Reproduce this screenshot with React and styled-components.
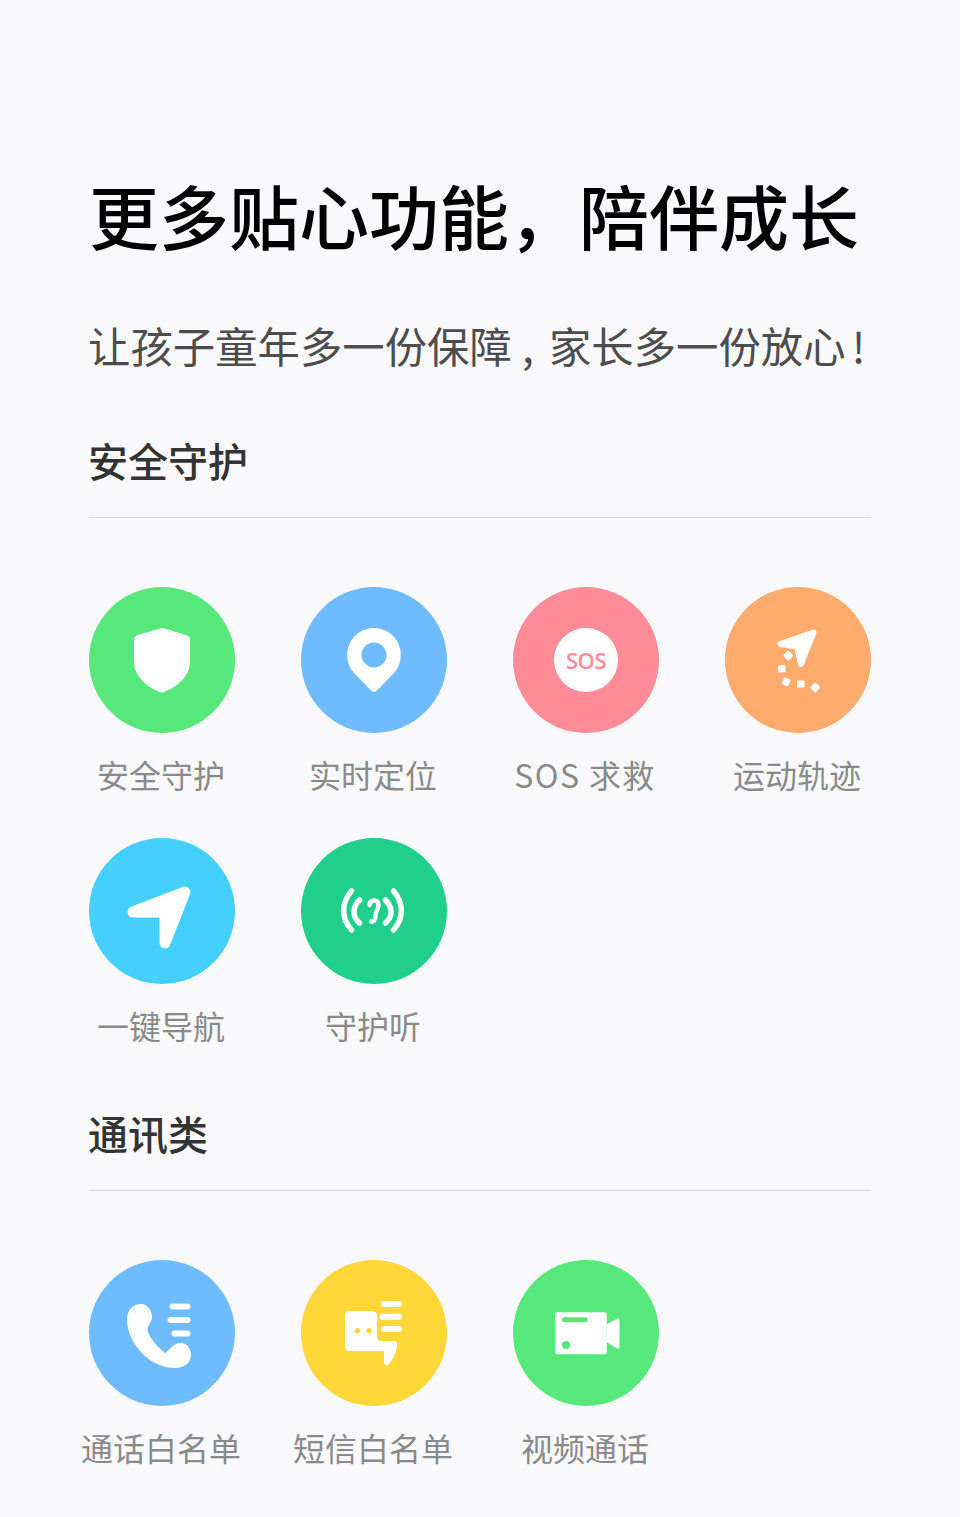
import React from "react";
import styled, { createGlobalStyle } from "styled-components";

const GlobalStyle = createGlobalStyle`
  html, body {
    margin: 0;
    padding: 0;
    background: #f9f9fc;
  }
  body {
    font-family: "Noto Sans CJK SC", "Noto Sans", sans-serif;
  }
`;

function ShieldIcon() {
  return (
    <Art viewBox="0 0 146 146">
      <path
        fill="#fff"
        d="M70.500 41.500q2.500-.8 5 0L98.500 48.500q2.500.8 2.500 3.500V74C101 90 88 100 73 106 58 100 45 90 45 74V52q0-2.700 2.500-3.500Z"
      />
    </Art>
  );
}

function PinIcon() {
  return (
    <Art viewBox="0 0 146 146">
      <path
        fill="#fff"
        fillRule="evenodd"
        d="M73 41A27 27 0 0 1 92 87L76 103.500Q73 106.500 70 103.500L54 87A27 27 0 0 1 73 41ZM73 55.500A12.500 12.500 0 1 0 73 80.500A12.500 12.500 0 1 0 73 55.500Z"
      />
    </Art>
  );
}

function TrailIcon() {
  return (
    <Art viewBox="0 0 146 146">
      <path
        fill="#fff"
        stroke="#fff"
        strokeWidth="6"
        strokeLinejoin="round"
        d="M88.500 45.500L55.500 57L72 59.500L76 77Z"
      />
      <g fill="#fff">
        <rect x="59.500" y="65" width="7.500" height="7.500" rx="1" transform="rotate(45 63.300 68.700)" />
        <rect x="53" y="78" width="7.500" height="7.500" rx="1" transform="rotate(-8 56.700 81.700)" />
        <rect x="57.500" y="91" width="7.500" height="7.500" rx="2" transform="rotate(25 61 94.700)" />
        <rect x="72" y="93.500" width="7.500" height="7" rx="1" />
        <rect x="86.500" y="96.500" width="7.500" height="7.500" rx="1" transform="rotate(45 90 100.300)" />
      </g>
    </Art>
  );
}

function NavIcon() {
  return (
    <Art viewBox="0 0 146 146">
      <path
        fill="#fff"
        stroke="#fff"
        strokeWidth="11"
        strokeLinejoin="round"
        d="M96 54L44 74L76 74L76 105Z"
      />
    </Art>
  );
}

function EarIcon() {
  return (
    <Art viewBox="0 0 146 146">
      <g fill="none" stroke="#fff" strokeWidth="5.500" strokeLinecap="round">
        <path d="M50.500 53C40 65 40 80 50.500 92" />
        <path d="M92.500 53C103 65 103 80 92.500 92" />
        <path d="M58.500 62C51 70 51 78 58.500 85" />
        <path d="M84.500 62C92 70 92 78 84.500 85" />
        <path strokeWidth="4.500" d="M68.500 67C69 63 71 62.500 73 62.500C76 62.500 77.500 64.500 77.500 67C77.500 71 74.500 73 74.500 78C74.500 82 72.500 84 70 83.500" />
      </g>
    </Art>
  );
}

function PhoneIcon() {
  return (
    <Art viewBox="0 0 146 146">
      <path
        fill="#fff"
        d="M52 44C58 44 63 50 63 57C63 62 58 66 58.500 70C60 77 68 87 76 93C80 90 85 83 91 83C98 83 102 88 102 95C102 103 95 108 86 108C58 108 38 80 38 60C38 50 44 44 52 44Z"
      />
      <g stroke="#fff" strokeWidth="6" strokeLinecap="round">
        <path d="M83.500 46.500H98.500" />
        <path d="M81.500 60H98.500" />
        <path d="M85.500 73.500H98.500" />
      </g>
    </Art>
  );
}

function MessageIcon() {
  return (
    <Art viewBox="0 0 146 146">
      <path
        fill="#fff"
        d="M48 51H71Q76 51 76 56V76Q76 81 80 81H94Q96 81 96 83C96 92 92 100 87 105Q83 106 83 101V91H48Q44 91 44 87V55Q44 51 48 51Z"
      />
      <circle cx="56.500" cy="70.700" r="2.700" fill="#ffd739" />
      <circle cx="68" cy="70.700" r="2.700" fill="#ffd739" />
      <g stroke="#fff" strokeWidth="6" strokeLinecap="round">
        <path d="M83 44H98" />
        <path d="M81.500 56.700H98" />
        <path d="M83.500 69H98" />
      </g>
    </Art>
  );
}

function VideoIcon() {
  return (
    <Art viewBox="0 0 146 146">
      <rect x="42.300" y="52.300" width="51.500" height="42" rx="2" fill="#fff" />
      <path fill="#fff" d="M93.700 64.300L104.500 58.500Q106.500 57.800 106.500 60V87Q106.500 89.500 104.500 88.500L93.700 82.300Z" />
      <path d="M51.500 59.700H72" stroke="#56e87a" strokeWidth="5" strokeLinecap="round" />
      <circle cx="53" cy="85" r="4" fill="#56e87a" />
    </Art>
  );
}

function SosBadgeText() {
  return <SosBadge>SOS</SosBadge>;
}

const guard = [
  { label: "安全守护", color: "#56e87a", icon: <ShieldIcon /> },
  { label: "实时定位", color: "#6ebcff", icon: <PinIcon /> },
  { label: "SOS 求救", color: "#ff8b97", icon: <SosBadgeText />, spaced: true },
  { label: "运动轨迹", color: "#ffab6e", icon: <TrailIcon /> },
  { label: "一键导航", color: "#45cffc", icon: <NavIcon /> },
  { label: "守护听", color: "#20cf8a", icon: <EarIcon /> },
];

const contact = [
  { label: "通话白名单", color: "#6ebcff", icon: <PhoneIcon /> },
  { label: "短信白名单", color: "#ffd739", icon: <MessageIcon /> },
  { label: "视频通话", color: "#56e87a", icon: <VideoIcon /> },
];

function FeatureGrid({ items }) {
  return (
    <Grid>
      {items.map((item) => (
        <Feature key={item.label}>
          <Disc $color={item.color}>{item.icon}</Disc>
          <Label $spaced={item.spaced}>{item.label}</Label>
        </Feature>
      ))}
    </Grid>
  );
}

export default function App() {
  return (
    <Page>
      <GlobalStyle />
      <Title>更多贴心功能，陪伴成长</Title>
      <Subtitle>
        让孩子童年多一份保障<Comma>,</Comma>家长多一份放心<Bang>!</Bang>
      </Subtitle>
      <Section>
        <SectionTitle>安全守护</SectionTitle>
        <Divider />
        <FeatureGrid items={guard} />
      </Section>
      <Section>
        <SectionTitle>通讯类</SectionTitle>
        <Divider />
        <FeatureGrid items={contact} />
      </Section>
    </Page>
  );
}

const Page = styled.div`
  box-sizing: border-box;
  width: 960px;
  height: 1517px;
  padding: 165px 89px 0;
  overflow: hidden;
  background: #f9f9fc;
`;

const Title = styled.h1`
  margin: 0;
  font-size: 70px;
  line-height: 100px;
  font-weight: 500;
  color: #000;
  white-space: nowrap;
`;

const Subtitle = styled.p`
  margin: 50px 0 0 -1px;
  font-size: 42.4px;
  line-height: 60px;
  font-weight: 400;
  color: #4d4d4d;
  white-space: nowrap;
`;

const Comma = styled.span`
  display: inline-block;
  width: 37px;
  padding-left: 10px;
  box-sizing: border-box;
`;

const Bang = styled.span`
  display: inline-block;
  width: 17px;
  padding-left: 6px;
  box-sizing: border-box;
`;

const Section = styled.section`
  margin-top: 55px;
  & + & {
    margin-top: 56px;
  }
`;

const SectionTitle = styled.h2`
  margin: 0 0 0 -1px;
  font-size: 40px;
  line-height: 60px;
  font-weight: 500;
  color: #333;
`;

const Divider = styled.div`
  height: 1px;
  margin-top: 27px;
  background: #d8d8d8;
`;

const Grid = styled.div`
  display: grid;
  grid-template-columns: repeat(4, 146px);
  column-gap: 66px;
  row-gap: 42px;
  margin-top: 69px;
`;

const Feature = styled.div`
  display: flex;
  flex-direction: column;
  align-items: center;
`;

const Disc = styled.div`
  display: flex;
  align-items: center;
  justify-content: center;
  width: 146px;
  height: 146px;
  border-radius: 50%;
  background: ${(p) => p.$color};
`;

const Art = styled.svg`
  display: block;
  width: 146px;
  height: 146px;
`;

const SosBadge = styled.div`
  display: flex;
  align-items: center;
  justify-content: center;
  width: 64px;
  height: 64px;
  border-radius: 50%;
  background: #fff;
  font-family: "Open Sans", sans-serif;
  font-size: 22px;
  font-weight: 600;
  letter-spacing: -0.5px;
  color: #ff8b97;
`;

const Label = styled.div`
  margin-top: 19px;
  padding-right: 2px;
  font-size: 32px;
  line-height: 44px;
  font-weight: 400;
  letter-spacing: ${(p) => (p.$spaced ? "1.4px" : "0")};
  color: #8a8a8a;
  white-space: nowrap;
`;
